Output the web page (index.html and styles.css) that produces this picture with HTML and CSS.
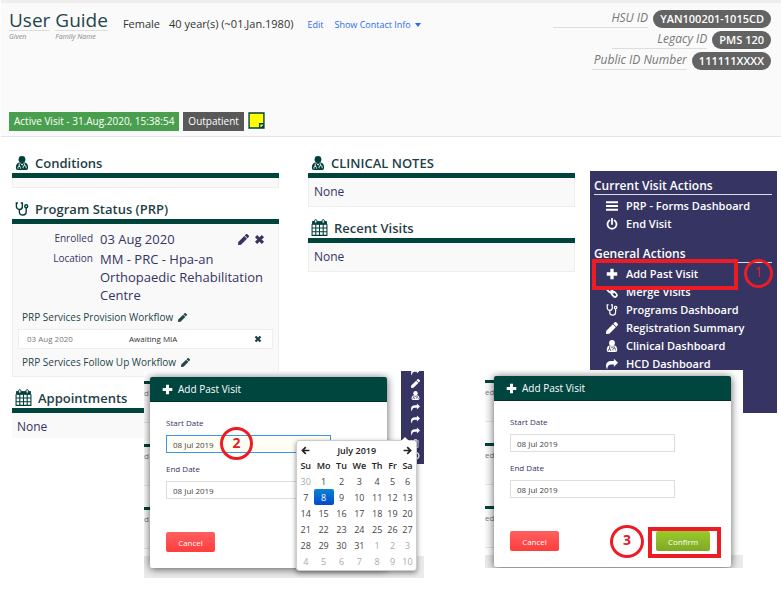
FILE: index.html
```html
<!DOCTYPE html>
<html lang="en">
<head>
<meta charset="utf-8">
<title>Patient dashboard - Add Past Visit</title>
<link rel="stylesheet" href="styles.css">
</head>
<body>
<svg class="sprite" aria-hidden="true">
  <symbol id="pencil" viewBox="0 0 512 512"><path fill="currentColor" d="M290.74 93.24l128.02 128.02-277.99 277.99-114.14 12.6C11.35 513.54-1.56 500.62.14 485.34l12.7-114.22 277.9-277.88zm207.2-19.06l-60.11-60.11c-18.75-18.75-49.16-18.75-67.91 0l-56.55 56.55 128.02 128.02 56.55-56.55c18.75-18.76 18.75-49.16 0-67.91z"/></symbol>
  <symbol id="cross" viewBox="0 0 16 16"><path d="M3 3l10 10M13 3L3 13" stroke="currentColor" stroke-width="4.5"/></symbol>
  <symbol id="plus" viewBox="0 0 16 16"><path d="M8 1v14M1 8h14" stroke="currentColor" stroke-width="4.4"/></symbol>
  <symbol id="bars" viewBox="0 0 16 16"><path d="M0 3h16M0 8h16M0 13h16" stroke="currentColor" stroke-width="2.4"/></symbol>
  <symbol id="power" viewBox="0 0 16 16"><path d="M4.6 3.4a6 6 0 1 0 6.8 0M8 1v7" fill="none" stroke="currentColor" stroke-width="2.4" stroke-linecap="round"/></symbol>
  <symbol id="link" viewBox="0 0 16 16"><g fill="none" stroke="currentColor" stroke-width="2.2"><rect x="1" y="2.6" width="8" height="5" rx="2.5" transform="rotate(45 5 5)"/><rect x="7" y="8.6" width="8" height="5" rx="2.5" transform="rotate(45 11 11)"/><path d="M6 6l4 4"/></g></symbol>
  <symbol id="steth" viewBox="0 0 16 16"><g fill="none" stroke="currentColor" stroke-width="1.6"><path d="M3.4 1.2H1.6V5a3.4 3.6 0 0 0 6.8 0V1.2H6.6"/><path d="M5 8.6V11a3.8 3.8 0 0 0 7.8 0V6.6"/><circle cx="12.8" cy="4.8" r="1.7"/></g></symbol>
  <symbol id="doctor" viewBox="0 0 16 16"><circle cx="8" cy="4" r="3.9" fill="currentColor"/><path fill="currentColor" d="M4.6 7.4h6.8c2.6.6 3.6 3 3.6 6 0 1.6-.8 2.6-2.4 2.600H3.400C1.800 16 1 15 1 13.400c0-3 1-5.400 3.600-6z"/><path class="knock" d="M4.800 8.500v4M3.400 14.500v-1.300a1.400 1.400 0 0 1 2.800 0v1.300M11 8.500v2.500M9.200 14v-1.300a1.800 1.800 0 0 1 3.600 0V14M6.500 8.500L8 10.500l1.500-2" fill="none" stroke-width="1"/></symbol>
  <symbol id="share" viewBox="0 0 16 16"><path fill="currentColor" d="M16 6.200L10.500 1v3H7C2.500 4 0 6.300 0 10.200 0 12 .6 13.500 1.500 15c.5-4.500 2-6.400 5.500-6.400h3.500v3z"/></symbol>
  <symbol id="calendar" viewBox="0 0 16 16"><path fill="currentColor" d="M1 2h14v3.500H1z"/><path d="M1 5v10.400h14V5M1 8.500h14M1 12h14M4.500 5v10.400M8 5v10.400M11.500 5v10.400" fill="none" stroke="currentColor" stroke-width="1"/><rect class="ring" x="3.400" y=".6" width="2.200" height="3.400" rx="1.100" stroke="currentColor" stroke-width=".9"/><rect class="ring" x="10.400" y=".6" width="2.200" height="3.400" rx="1.100" stroke="currentColor" stroke-width=".9"/></symbol>
  <symbol id="left" viewBox="0 0 16 16"><path d="M15 8H3M8.500 2L2.500 8l6 6" fill="none" stroke="currentColor" stroke-width="3"/></symbol>
  <symbol id="right" viewBox="0 0 16 16"><path d="M1 8h12M7.500 2l6 6-6 6" fill="none" stroke="currentColor" stroke-width="3"/></symbol>
  <symbol id="note" viewBox="0 0 16 16"><path d="M1 1h14v10l-4 4H1z" fill="#ff0"/><path d="M1 1h14v14H1zM11 15v-4h4" fill="none" stroke="#003f3a" stroke-width="1.300"/><path d="M15 11.500V15h-3.500z" fill="#003f3a"/></symbol>
  <symbol id="trash" viewBox="0 0 16 16"><path d="M2 3.500h12M6 3V1h4v2M3.500 4v11h9V4M6.500 6v7M9.500 6v7" fill="none" stroke="currentColor" stroke-width="1.500"/></symbol>
</svg>

<header class="patient">
  <div class="summary">
    <div class="identity">
      <div class="name">User<small>Given</small></div>
      <div class="name">Guide<small>Family Name</small></div>
      <div class="facts"><span>Female</span><span>40 year(s) (~01.Jan.1980)</span></div>
      <a class="edit" href="#">Edit</a>
      <a href="#">Show Contact Info <i class="caret"></i></a>
    </div>
    <div class="tags">
      <span class="tag active">Active Visit - 31.Aug.2020, 15:38:54</span>
      <span class="tag">Outpatient</span>
      <svg class="note"><use href="#note"/></svg>
    </div>
  </div>
  <div class="ids">
    <div class="id"><em>HSU ID</em><b>YAN100201-1015CD</b></div>
    <div class="id"><em>Legacy ID</em><b>PMS 120</b></div>
    <div class="id"><em>Public ID Number</em><b>111111XXXX</b></div>
  </div>
</header>

<main class="dashboard">
  <div class="columns">
    <div class="column">
      <section class="panel">
        <h2><svg><use href="#doctor"/></svg>Conditions</h2>
        <div class="body empty"></div>
      </section>
      <section class="panel">
        <h2><svg><use href="#steth"/></svg>Program Status (PRP)</h2>
        <div class="body program">
          <dl>
            <dt>Enrolled</dt>
            <dd class="enrolled">03 Aug 2020<span class="tools"><svg><use href="#pencil"/></svg><svg><use href="#cross"/></svg></span></dd>
            <dt>Location</dt>
            <dd>MM - PRC - Hpa-an Orthopaedic Rehabilitation Centre</dd>
          </dl>
          <p>PRP Services Provision Workflow <svg><use href="#pencil"/></svg></p>
          <div class="state"><span>03 Aug 2020</span><b>Awaiting MIA</b><svg><use href="#cross"/></svg></div>
          <p>PRP Services Follow Up Workflow <svg><use href="#pencil"/></svg></p>
        </div>
      </section>
      <section class="panel">
        <h2><svg class="big"><use href="#calendar"/></svg>Appointments</h2>
        <div class="body open">None</div>
      </section>
    </div>
    <div class="column">
      <section class="panel">
        <h2><svg><use href="#doctor"/></svg>CLINICAL NOTES</h2>
        <div class="body">None</div>
      </section>
      <section class="panel">
        <h2><svg class="big"><use href="#calendar"/></svg>Recent Visits</h2>
        <div class="body">None</div>
      </section>
    </div>
  </div>
  <nav class="actions">
    <h3>Current Visit Actions</h3>
    <ul>
      <li><a href="#"><svg><use href="#bars"/></svg>PRP - Forms Dashboard</a></li>
      <li><a href="#"><svg><use href="#power"/></svg>End Visit</a></li>
    </ul>
    <h3>General Actions</h3>
    <ul>
      <li><a href="#"><svg><use href="#plus"/></svg>Add Past Visit</a></li>
      <li><a href="#"><svg><use href="#link"/></svg>Merge Visits</a></li>
      <li><a href="#"><svg><use href="#steth"/></svg>Programs Dashboard</a></li>
      <li><a href="#"><svg><use href="#pencil"/></svg>Registration Summary</a></li>
      <li><a href="#"><svg><use href="#doctor"/></svg>Clinical Dashboard</a></li>
      <li><a href="#"><svg><use href="#share"/></svg>HCD Dashboard</a></li>
    </ul>
    <span class="frame frame-add"></span>
    <span class="step step-1">1</span>
  </nav>
</main>

<div class="scene scene-pick">
  <div class="behind"><span>d</span><span>d</span><span>d</span></div>
  <div class="rail"><svg><use href="#share"/></svg><svg><use href="#pencil"/></svg><svg><use href="#doctor"/></svg><svg><use href="#share"/></svg><svg><use href="#share"/></svg><svg><use href="#share"/></svg><svg><use href="#trash"/></svg><svg><use href="#power"/></svg></div>
  <form class="dialog">
    <h2><svg><use href="#plus"/></svg>Add Past Visit</h2>
    <div class="fields">
      <label for="start-1">Start Date</label>
      <input id="start-1" class="focused" value="08 Jul 2019">
      <label for="end-1">End Date</label>
      <input id="end-1" value="08 Jul 2019">
      <div class="buttons"><button type="button" class="cancel">Cancel</button></div>
    </div>
  </form>
  <div class="picker">
    <table>
      <thead>
        <tr class="month"><th><svg><use href="#left"/></svg></th><th colspan="5">July 2019</th><th><svg><use href="#right"/></svg></th></tr>
        <tr><th>Su</th><th>Mo</th><th>Tu</th><th>We</th><th>Th</th><th>Fr</th><th>Sa</th></tr>
      </thead>
      <tbody>
        <tr><td class="other">30</td><td>1</td><td>2</td><td>3</td><td>4</td><td>5</td><td>6</td></tr>
        <tr><td>7</td><td class="chosen">8</td><td>9</td><td>10</td><td>11</td><td>12</td><td>13</td></tr>
        <tr><td>14</td><td>15</td><td>16</td><td>17</td><td>18</td><td>19</td><td>20</td></tr>
        <tr><td>21</td><td>22</td><td>23</td><td>24</td><td>25</td><td>26</td><td>27</td></tr>
        <tr><td>28</td><td>29</td><td>30</td><td>31</td><td class="other">1</td><td class="other">2</td><td class="other">3</td></tr>
        <tr class="other"><td>4</td><td>5</td><td>6</td><td>7</td><td>8</td><td>9</td><td>10</td></tr>
      </tbody>
    </table>
  </div>
  <span class="step step-2">2</span>
</div>

<div class="scene scene-confirm">
  <div class="behind"><span>ed</span><span>ed</span><span>ed</span></div>
  <form class="dialog">
    <h2><svg><use href="#plus"/></svg>Add Past Visit</h2>
    <div class="fields">
      <label for="start-2">Start Date</label>
      <input id="start-2" value="08 Jul 2019">
      <label for="end-2">End Date</label>
      <input id="end-2" value="08 Jul 2019">
      <div class="buttons"><button type="button" class="cancel">Cancel</button><button type="button" class="confirm">Confirm</button></div>
    </div>
  </form>
  <span class="frame frame-confirm"></span>
  <span class="step step-3">3</span>
</div>
</body>
</html>
```
FILE: styles.css
```css
* { box-sizing: border-box; }
body {
  --icon-ground: #fff;
  margin: 0;
  position: relative;
  min-height: 100vh;
  background: #fff;
  color: #363463;
  font: 12px/18px "Open Sans", "Noto Sans", sans-serif;
}
h2, h3, p, ul, dl, dd { margin: 0; padding: 0; }
ul { list-style: none; }
a { color: #2a6cf0; text-decoration: none; }
.sprite { position: absolute; width: 0; height: 0; }
.knock { stroke: var(--icon-ground); }
.ring { fill: #fff; }

/* Patient header */
.patient {
  display: flex;
  justify-content: space-between;
  height: 137px;
  margin-left: 1px;
  padding: 7px 10px 5px 8px;
  border-top: 3px solid #eee;
  border-bottom: 1px solid #e4e4e4;
  background: #fafafa;
}
.summary { display: flex; flex-direction: column; justify-content: space-between; }
.identity { display: flex; font-size: 9px; }
.name {
  margin-right: 5px;
  color: #24454a;
  font-size: 19px;
  line-height: 20px;
}
.name small {
  display: block;
  border-top: 1px solid #ddd;
  color: #888;
  font-size: 7px;
  font-style: italic;
  line-height: 11px;
}
.facts {
  display: flex;
  gap: 9px;
  margin: 5px 14px 0 10px;
  color: #333;
  font-size: 11px;
}
.identity a { margin: 6px 11px 0 0; line-height: 18px; }
.caret {
  display: inline-block;
  margin-left: 2px;
  border: 3px solid transparent;
  border-top: 4px solid #2a6cf0;
  border-bottom: 0;
  vertical-align: 1px;
}
.tags { display: flex; gap: 4px; }
.tag {
  padding: 0 5px;
  background: #595959;
  color: #fff;
  font-size: 10px;
  line-height: 19px;
}
.tag.active { background: #4a9f4e; }
.note { width: 17px; height: 17px; }
.id { display: flex; justify-content: flex-end; gap: 5px; margin-bottom: 3px; line-height: 18px; }
.id em {
  min-width: 95px;
  height: 18px;
  border-bottom: 1px solid #ddd;
  color: #777;
  line-height: 16px;
  text-align: right;
}
.id b {
  padding: 0 7px;
  border-radius: 9px;
  background: #636363;
  color: #fff;
  font-size: 11px;
  font-weight: 600;
}

/* Dashboard */
.dashboard {
  display: grid;
  grid-template-columns: 1fr 187px;
  gap: 15px;
  align-items: start;
  padding: 15px 4px 0 12px;
}
.columns { display: grid; grid-template-columns: 1fr 1fr; gap: 29px; align-items: start; }
.column { display: grid; gap: 10px; }
.panel h2 {
  display: flex;
  align-items: center;
  gap: 6px;
  height: 26px;
  padding-left: 3px;
  border-bottom: 5px solid #00433b;
  color: #1f3f45;
  font-size: 13px;
  font-weight: 600;
  line-height: 20px;
}
.panel h2 svg { width: 14px; height: 14px; color: #003f3a; }
.panel h2 .big { width: 17px; height: 17px; }
.body {
  padding: 5px;
  border: 1px solid #eee;
  border-top: 0;
  background: #f9f9f9;
}
.body.empty { padding: 5px 0 4px; }
.body.open { border: 0; padding: 5px 5px 2px; }
.program { padding: 6px 5px 6px; }
.program dl { display: grid; grid-template-columns: 75px 1fr; gap: 2px 7px; padding-right: 8px; font-size: 13px; }
.program dt { font-size: 10px; line-height: 16px; text-align: right; }
.enrolled { display: flex; justify-content: space-between; }
.tools { display: flex; align-items: center; gap: 5px; }
.tools svg { width: 11px; height: 11px; }
.program p { padding-left: 4px; color: #24454a; font-size: 10px; line-height: 16px; margin-top: 5px; }
.program p svg { width: 9px; height: 9px; margin-left: 2px; vertical-align: -1px; }
.state {
  display: grid;
  grid-template-columns: 102px 1fr 9px;
  align-items: center;
  margin-top: 4px;
  padding: 0 9px 0 8px;
  border: 1px solid #eee;
  background: #fff;
  color: #777;
  font-size: 8px;
}
.state b { color: #333; font-weight: 500; }
.state svg { width: 8px; height: 8px; color: #1f3f45; }

/* Action sidebar */
.actions {
  --icon-ground: #363463;
  position: relative;
  height: 242px;
  margin-top: 19px;
  padding: 7px 5px 0 4px;
  background: #363463;
  color: #fff;
}
.actions h3 {
  border-bottom: 1px solid #dcdce6;
  font-size: 12px;
  font-weight: 600;
  line-height: 16px;
}
.actions ul { padding: 2px 0 13px 12px; }
.actions li { line-height: 18px; }
.actions a { display: flex; align-items: center; gap: 8px; color: #fff; font-size: 11px; font-weight: 600; }
.actions a svg { width: 12px; height: 12px; }

/* Step callouts */
.frame { position: absolute; border: 4px solid #ed1c24; }
.frame-add { left: 2px; top: 88px; width: 146px; height: 31px; }
.frame-confirm { left: 163px; top: 157px; width: 73px; height: 31px; }
.step {
  position: absolute;
  width: 33px;
  height: 33px;
  border: 3px solid #ed1c24;
  border-radius: 50%;
  color: #d8232a;
  font-size: 14px;
  font-weight: 700;
  line-height: 26px;
  text-align: center;
}
.step-1 { left: 154px; top: 88px; width: 29px; height: 29px; font-weight: 400; line-height: 20px; }
.step-2 { left: 76px; top: 56px; }
.step-3 { left: 125px; top: 155px; width: 34px; line-height: 24px; }

/* Dialog scenes laid over the dashboard */
.scene { position: absolute; overflow: hidden; background: linear-gradient(#fff 185px, #ebebeb 185px); }
.scene-pick { left: 144px; top: 371px; width: 280px; height: 207px; }
.scene-confirm { left: 485px; top: 370px; width: 258px; height: 198px; }
.behind { position: absolute; left: 0; top: 10px; width: 20px; }
.behind span {
  display: block;
  height: 42px;
  margin-bottom: 21px;
  border-top: 3px solid #00433b;
  border-bottom: 1px solid #e6e6e6;
  background: #fafafa;
  color: #777;
  font-size: 8px;
}
.rail {
  --icon-ground: #363463;
  position: absolute;
  right: 0;
  top: 0;
  display: flex;
  flex-direction: column;
  justify-content: flex-end;
  gap: 3px;
  width: 23px;
  height: 93px;
  padding: 0 0 4px 10px;
  overflow: hidden;
  background: #363463;
  color: #fff;
}
.rail svg { flex: none; width: 9px; height: 9px; }
.dialog {
  position: absolute;
  left: 6px;
  top: 6px;
  width: 237px;
  border-radius: 2px;
  background: #fff;
  box-shadow: 0 1px 8px rgba(0, 0, 0, .65);
}
.scene-confirm .dialog { left: 9px; }
.dialog h2 {
  display: flex;
  align-items: center;
  gap: 5px;
  height: 25px;
  padding-left: 12px;
  border-bottom: 1px solid #00312b;
  border-radius: 2px 2px 0 0;
  background: #00463f;
  color: #fff;
  font-size: 10px;
  font-weight: 400;
}
.dialog h2 svg { width: 11px; height: 11px; }
.fields { padding: 14px 21px 16px 16px; }
.fields label { display: block; font-size: 8px; line-height: 14px; }
.fields input {
  display: block;
  width: 165px;
  height: 18px;
  margin: 5px 0 9px;
  padding: 0 6px;
  border: 1px solid #ddd;
  background: #fff;
  color: #444;
  font: 8px "Open Sans", "Noto Sans", sans-serif;
}
.fields .focused { border-color: #3d96ea; background: #fffef5; }
.buttons { display: flex; justify-content: space-between; margin-top: 33px; }
.buttons button {
  height: 20px;
  padding: 0;
  border: 0;
  border-radius: 2px;
  color: #fff;
  font: 8px "Open Sans", "Noto Sans", sans-serif;
}
.cancel { width: 49px; background: linear-gradient(#ff5f5f, #ff3d3d); }
.confirm { width: 54px; background: linear-gradient(#9aca2c, #7fa925); }

/* Date picker */
.picker {
  position: absolute;
  left: 152px;
  top: 69px;
  width: 121px;
  padding: 2px 1px 1px;
  border: 1px solid #ccc;
  border-radius: 3px;
  background: #fff;
  box-shadow: 0 2px 5px rgba(0, 0, 0, .45);
}
.picker::before {
  content: "";
  position: absolute;
  right: 7px;
  top: -4px;
  border: 4px solid transparent;
  border-top: 0;
  border-bottom-color: #fff;
}
.picker table { width: 100%; border-collapse: collapse; color: #444; font-size: 9px; line-height: 15px; text-align: center; }
.picker th { padding: 0; height: 15px; color: #222; font-weight: 600; }
.picker td { padding: 0; height: 16px; }
.picker th svg { display: block; width: 9px; height: 9px; margin: auto; }
.picker .other { color: #aaa; }
.picker .chosen { border-radius: 2px; background: linear-gradient(#0a84d0, #0447cc); color: #fff; }
```
